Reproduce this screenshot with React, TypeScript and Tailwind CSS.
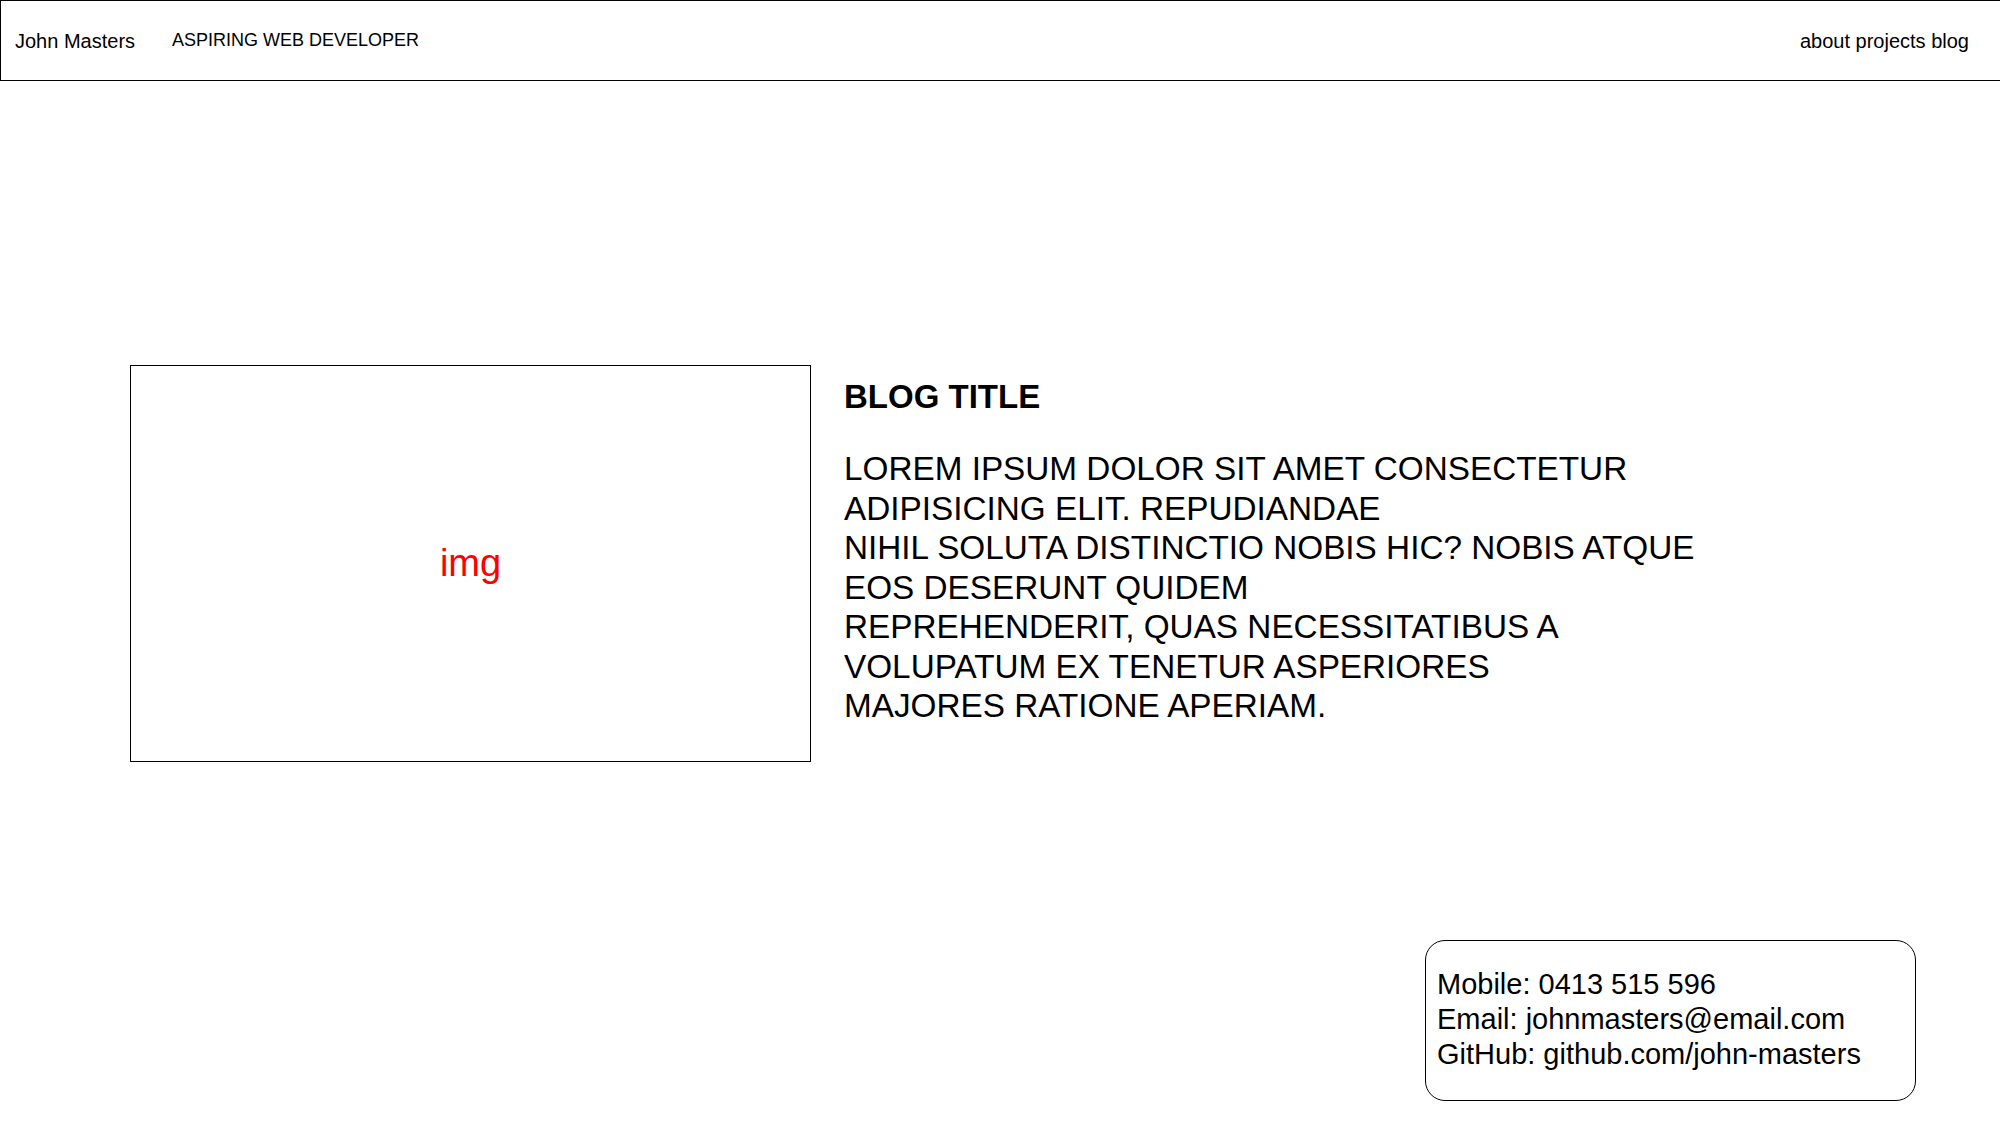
const lines = [
  "LOREM IPSUM DOLOR SIT AMET CONSECTETUR",
  "ADIPISICING ELIT. REPUDIANDAE",
  "NIHIL SOLUTA DISTINCTIO NOBIS HIC? NOBIS ATQUE",
  "EOS DESERUNT QUIDEM",
  "REPREHENDERIT, QUAS NECESSITATIBUS A",
  "VOLUPATUM EX TENETUR ASPERIORES",
  "MAJORES RATIONE APERIAM.",
];

export default function App() {
  return (
    <div className="min-h-[1125px] w-[2000px] bg-white text-black font-['Liberation_Sans',Arial,sans-serif]">
      {/* top bar */}
      <header className="flex h-[81px] items-center border-y border-l border-black pl-[14px] pr-[31px]">
        <span className="text-[20px]">John Masters</span>
        <span className="ml-[37px] text-[18px]">ASPIRING WEB DEVELOPER</span>
        <nav className="ml-auto text-[20px]">about projects blog</nav>
      </header>

      <main className="flex gap-[33px] pl-[130px] pt-[284px]">
        <div className="flex h-[397px] w-[681px] items-center justify-center border border-black">
          <span className="text-[38px] text-[#ff0000]">img</span>
        </div>
        <div className="pt-[12px]">
          <h1 className="text-[33px] leading-[39px] font-bold">BLOG TITLE</h1>
          <p className="mt-[33px] whitespace-nowrap text-[33.3px] leading-[39.5px]">
            {lines.map((l) => (
              <span key={l} className="block">
                {l}
              </span>
            ))}
          </p>
        </div>
      </main>

      <div className="mt-[178px] flex justify-end pr-[84px]">
        <div className="h-[161px] w-[491px] rounded-[20px] border border-black px-[11px] pt-[26px] text-[29px] leading-[35px]">
          <p>Mobile: 0413 515 596</p>
          <p>Email: johnmasters@email.com</p>
          <p>GitHub: github.com/john-masters</p>
        </div>
      </div>
    </div>
  );
}
